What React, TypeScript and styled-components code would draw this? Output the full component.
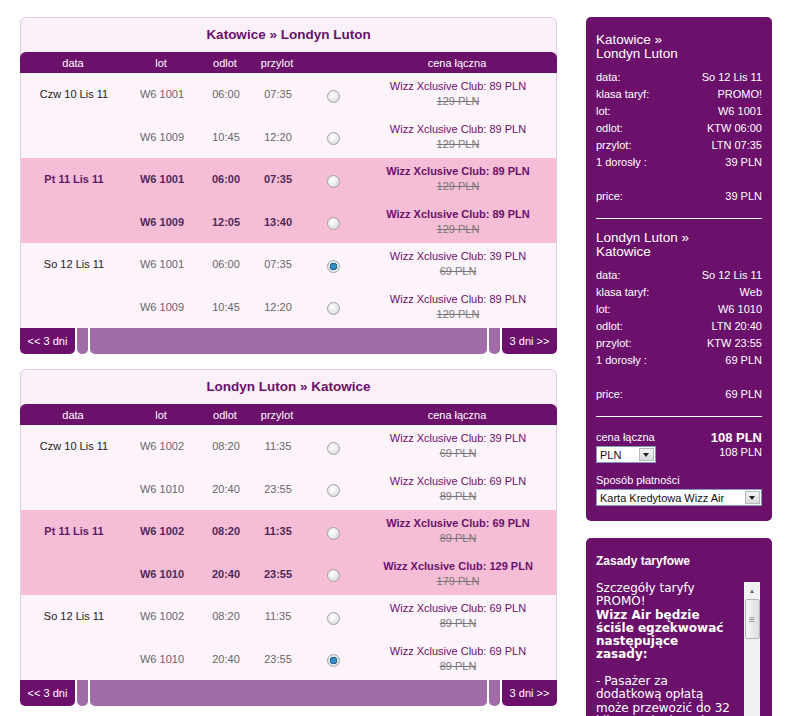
import React from "react";
import styled, { createGlobalStyle } from "styled-components";

const GlobalStyle = createGlobalStyle`
  body {
    margin: 0;
    background: #fff;
    font-family: "Liberation Sans", Arial, sans-serif;
    font-size: 11px;
  }
`;

type Flight = { lot: string; odlot: string; przylot: string; club: string; old: string; checked?: boolean };
type Day = { date: string; highlight?: boolean; flights: Flight[] };

const outbound: Day[] = [
  {
    date: "Czw 10 Lis 11",
    flights: [
      { lot: "W6 1001", odlot: "06:00", przylot: "07:35", club: "89 PLN", old: "129 PLN" },
      { lot: "W6 1009", odlot: "10:45", przylot: "12:20", club: "89 PLN", old: "129 PLN" },
    ],
  },
  {
    date: "Pt 11 Lis 11",
    highlight: true,
    flights: [
      { lot: "W6 1001", odlot: "06:00", przylot: "07:35", club: "89 PLN", old: "129 PLN" },
      { lot: "W6 1009", odlot: "12:05", przylot: "13:40", club: "89 PLN", old: "129 PLN" },
    ],
  },
  {
    date: "So 12 Lis 11",
    flights: [
      { lot: "W6 1001", odlot: "06:00", przylot: "07:35", club: "39 PLN", old: "69 PLN", checked: true },
      { lot: "W6 1009", odlot: "10:45", przylot: "12:20", club: "89 PLN", old: "129 PLN" },
    ],
  },
];

const inbound: Day[] = [
  {
    date: "Czw 10 Lis 11",
    flights: [
      { lot: "W6 1002", odlot: "08:20", przylot: "11:35", club: "39 PLN", old: "69 PLN" },
      { lot: "W6 1010", odlot: "20:40", przylot: "23:55", club: "69 PLN", old: "89 PLN" },
    ],
  },
  {
    date: "Pt 11 Lis 11",
    highlight: true,
    flights: [
      { lot: "W6 1002", odlot: "08:20", przylot: "11:35", club: "69 PLN", old: "89 PLN" },
      { lot: "W6 1010", odlot: "20:40", przylot: "23:55", club: "129 PLN", old: "179 PLN" },
    ],
  },
  {
    date: "So 12 Lis 11",
    flights: [
      { lot: "W6 1002", odlot: "08:20", przylot: "11:35", club: "69 PLN", old: "89 PLN" },
      { lot: "W6 1010", odlot: "20:40", przylot: "23:55", club: "69 PLN", old: "89 PLN", checked: true },
    ],
  },
];

export default function App() {
  return (
    <>
      <GlobalStyle />
      <Page>
        <MainColumn>
          <FlightPanel title="Katowice » Londyn Luton" days={outbound} />
          <FlightPanel title="Londyn Luton » Katowice" days={inbound} />
        </MainColumn>
        <SideColumn>
          <SummaryBox>
            <Leg
              title="Katowice » Londyn Luton"
              rows={[
                ["data:", "So 12 Lis 11"],
                ["klasa taryf:", "PROMO!"],
                ["lot:", "W6 1001"],
                ["odlot:", "KTW 06:00"],
                ["przylot:", "LTN 07:35"],
                ["1 dorosły :", "39 PLN"],
              ]}
              price="39 PLN"
            />
            <Separator />
            <Leg
              title="Londyn Luton » Katowice"
              rows={[
                ["data:", "So 12 Lis 11"],
                ["klasa taryf:", "Web"],
                ["lot:", "W6 1010"],
                ["odlot:", "LTN 20:40"],
                ["przylot:", "KTW 23:55"],
                ["1 dorosły :", "69 PLN"],
              ]}
              price="69 PLN"
            />
            <Separator />
            <TotalRow>
              <span>cena łączna</span>
              <TotalValue>108 PLN</TotalValue>
            </TotalRow>
            <CurrencyRow>
              <FakeSelect $width={60}>
                <span>PLN</span>
                <SelectArrow />
              </FakeSelect>
              <span>108 PLN</span>
            </CurrencyRow>
            <PayLabel>Sposób płatności</PayLabel>
            <FakeSelect>
              <span>Karta Kredytowa Wizz Air</span>
              <SelectArrow />
            </FakeSelect>
          </SummaryBox>

          <RulesBox>
            <RulesTitle>Zasady taryfowe</RulesTitle>
            <RulesScroll>
              <RulesText>
                Szczegóły taryfy PROMO!
                <br />
                <b>Wizz Air będzie ściśle egzekwować następujące zasady:</b>
                <br />
                <br />
                - Pasażer za dodatkową opłatą może przewozić do 32 kilogramów bagażu rejestrowanego.
              </RulesText>
              <Scrollbar>
                <ScrollButton>▲</ScrollButton>
                <ScrollThumb>≡</ScrollThumb>
              </Scrollbar>
            </RulesScroll>
          </RulesBox>
        </SideColumn>
      </Page>
    </>
  );
}

const FlightPanel = ({ title, days }: { title: string; days: Day[] }) => (
  <PanelWrap>
    <Panel>
      <PanelTitle>{title}</PanelTitle>
      <HeaderRow>
        <span>data</span>
        <span>lot</span>
        <span>odlot</span>
        <span>przylot</span>
        <span />
        <span>cena łączna</span>
      </HeaderRow>
      {days.map((day) => (
        <DayGroup key={day.date} $highlight={!!day.highlight}>
          {day.flights.map((f, i) => (
            <FlightRow key={f.lot}>
              <DateCell $highlight={!!day.highlight}>{i === 0 ? day.date : ""}</DateCell>
              <Cell>{f.lot}</Cell>
              <Cell>{f.odlot}</Cell>
              <Cell>{f.przylot}</Cell>
              <Cell>
                <Radio $checked={!!f.checked} />
              </Cell>
              <PriceCell>
                <ClubPrice>Wizz Xclusive Club: {f.club}</ClubPrice>
                <OldPrice>{f.old}</OldPrice>
              </PriceCell>
            </FlightRow>
          ))}
        </DayGroup>
      ))}
    </Panel>
    <PagerBar>
      <PagerButton>&lt;&lt; 3 dni</PagerButton>
      <PagerTab />
      <PagerFill />
      <PagerTab />
      <PagerButton>3 dni &gt;&gt;</PagerButton>
    </PagerBar>
  </PanelWrap>
);

const Leg = ({ title, rows, price }: { title: string; rows: string[][]; price: string }) => (
  <>
    <LegTitle>{title}</LegTitle>
    {rows.map(([label, value]) => (
      <InfoRow key={label}>
        <span>{label}</span>
        <span>{value}</span>
      </InfoRow>
    ))}
    <PriceRow>
      <span>price:</span>
      <span>{price}</span>
    </PriceRow>
  </>
);

const purple = "#6b106b";
const lilac = "#9f6ca7";

const Page = styled.div`
  display: flex;
  align-items: flex-start;
  gap: 29px;
  padding: 17px 0 0 20px;
`;

const MainColumn = styled.div`
  width: 537px;
  display: flex;
  flex-direction: column;
  gap: 15px;
`;

const PanelWrap = styled.div`
  display: flex;
  flex-direction: column;
`;

const Panel = styled.div`
  border: 1px solid #e2cde2;
  border-bottom: none;
  border-radius: 6px 6px 0 0;
  background: #f9f0f9;
`;

const PanelTitle = styled.div`
  height: 34px;
  line-height: 34px;
  text-align: center;
  color: ${purple};
  font-weight: bold;
  font-size: 13.5px;
`;

const columns = "106px 70px 58px 46px 64px 186px 1fr";

const HeaderRow = styled.div`
  display: grid;
  grid-template-columns: ${columns};
  margin: 0 -1px;
  height: 21px;
  align-items: center;
  text-align: center;
  background: ${purple};
  color: #fff;
  border-radius: 6px 6px 0 0;
`;

const DayGroup = styled.div<{ $highlight: boolean }>`
  background: ${(p) => (p.$highlight ? "#f6bdd6" : "#fdf3fb")};
  color: ${(p) => (p.$highlight ? "#4e2a58" : "#666")};
  font-weight: ${(p) => (p.$highlight ? "bold" : "normal")};
`;

const FlightRow = styled.div`
  display: grid;
  grid-template-columns: ${columns};
  height: 42.5px;
  align-items: center;
  text-align: center;
`;

const Cell = styled.div`
  display: flex;
  justify-content: center;
  align-items: center;
`;

const DateCell = styled(Cell)<{ $highlight: boolean }>`
  color: ${(p) => (p.$highlight ? "#5c1a68" : "#222")};
`;

const PriceCell = styled.div`
  display: flex;
  flex-direction: column;
  align-items: center;
  line-height: 15px;
`;

const ClubPrice = styled.span`
  color: ${purple};
`;

const OldPrice = styled.span`
  color: #777;
  font-weight: normal;
  text-decoration: line-through;
`;

const Radio = styled.span<{ $checked: boolean }>`
  width: 11px;
  height: 11px;
  margin-top: 4px;
  border-radius: 50%;
  border: 1px solid #a2a2a2;
  background: ${(p) =>
    p.$checked
      ? "radial-gradient(circle, #2f8fc4 0 2.5px, #1d4f73 3.5px, #d8e6ef 4px, #f5f5f5 100%)"
      : "radial-gradient(circle at 40% 35%, #ffffff 0, #e6e6e6 60%, #cfcfcf 100%)"};
`;

const PagerBar = styled.div`
  display: flex;
  height: 26px;
  gap: 2px;
`;

const PagerButton = styled.div`
  width: 55px;
  display: flex;
  align-items: center;
  justify-content: center;
  background: ${purple};
  color: #fff;
  border-radius: 0 0 5px 5px;
`;

const PagerTab = styled.div`
  width: 11px;
  background: ${lilac};
  border-radius: 0 0 5px 5px;
`;

const PagerFill = styled.div`
  flex: 1;
  background: ${lilac};
  border-radius: 0 0 5px 5px;
`;

const SideColumn = styled.div`
  width: 186px;
  display: flex;
  flex-direction: column;
  gap: 17px;
`;

const SummaryBox = styled.div`
  background: ${purple};
  color: #fff;
  border-radius: 5px;
  padding: 16px 10px 15px;
`;

const LegTitle = styled.div`
  max-width: 110px;
  font-size: 13.5px;
  line-height: 13.5px;
  margin-bottom: 9px;
`;

const InfoRow = styled.div`
  display: flex;
  justify-content: space-between;
  line-height: 17px;
`;

const PriceRow = styled(InfoRow)`
  margin-top: 17px;
`;

const Separator = styled.div`
  border-top: 1px solid #fff;
  margin: 13px 0 12px;
`;

const TotalRow = styled.div`
  display: flex;
  justify-content: space-between;
  align-items: center;
  line-height: 17px;
`;

const TotalValue = styled.span`
  font-weight: bold;
  font-size: 13px;
`;

const CurrencyRow = styled.div`
  display: flex;
  justify-content: space-between;
  align-items: flex-start;
`;

const FakeSelect = styled.div<{ $width?: number }>`
  box-sizing: border-box;
  width: ${(p) => (p.$width ? `${p.$width}px` : "100%")};
  height: 17px;
  display: flex;
  align-items: center;
  justify-content: space-between;
  background: #fff;
  border: 1px solid #7f9db9;
  color: #111;
  font-size: 11px;
  padding-left: 3px;
`;

const SelectArrow = styled.span`
  width: 15px;
  height: 13px;
  margin-right: 1px;
  box-sizing: border-box;
  border: 1px solid #b8b8b8;
  background: linear-gradient(#f4f4f4, #d9d9d9);
  position: relative;
  &::after {
    content: "";
    position: absolute;
    left: 3px;
    top: 4px;
    border-left: 3.5px solid transparent;
    border-right: 3.5px solid transparent;
    border-top: 4px solid #222;
  }
`;

const PayLabel = styled.div`
  margin-top: 9px;
  line-height: 17px;
`;

const RulesBox = styled.div`
  background: ${purple};
  color: #fff;
  border-radius: 5px 5px 0 0;
  padding: 16px 12px 14px 10px;
`;

const RulesTitle = styled.div`
  font-weight: bold;
  font-size: 12px;
  line-height: 14px;
  margin-bottom: 14px;
`;

const RulesScroll = styled.div`
  display: flex;
  justify-content: space-between;
  align-items: stretch;
`;

const RulesText = styled.div`
  width: 136px;
  font-family: "DejaVu Sans", Verdana, sans-serif;
  font-size: 12px;
  line-height: 13.3px;
`;

const Scrollbar = styled.div`
  width: 16px;
  flex-shrink: 0;
  background: #f1f1f1;
  display: flex;
  flex-direction: column;
  align-items: center;
`;

const ScrollButton = styled.div`
  width: 16px;
  height: 17px;
  color: #555;
  font-size: 6px;
  display: flex;
  align-items: center;
  justify-content: center;
`;

const ScrollThumb = styled.div`
  box-sizing: border-box;
  width: 15px;
  height: 40px;
  border: 1px solid #b5b5b5;
  border-radius: 2px;
  background: linear-gradient(90deg, #f6f6f6, #dedede);
  color: #888;
  font-size: 10px;
  display: flex;
  align-items: center;
  justify-content: center;
`;
